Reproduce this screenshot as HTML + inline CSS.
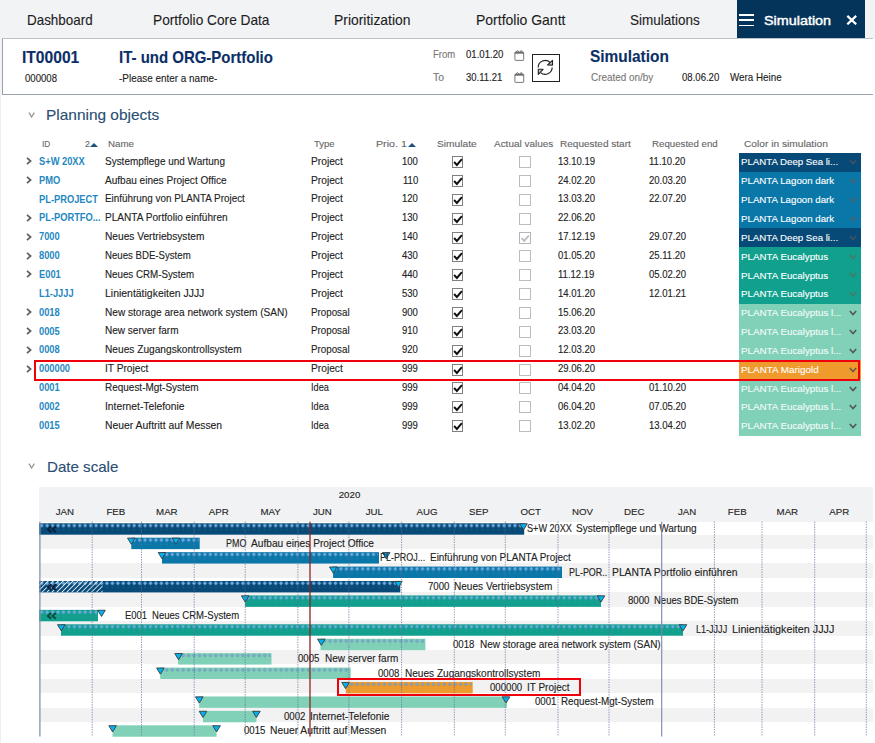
<!DOCTYPE html>
<html><head><meta charset="utf-8"><style>
html,body{margin:0;padding:0;width:875px;height:743px;overflow:hidden;background:#fff;position:relative;}
.t{position:absolute;white-space:nowrap;line-height:1;font-family:"Liberation Sans", sans-serif;-webkit-text-stroke:0.12px currentColor;}
</style></head><body>
<div style="position:absolute;left:0.00px;top:0.00px;width:875.00px;height:38.00px;background:#f2f3f5"></div>
<div class="t" style="left:26.70px;top:13.30px;font-size:14.3px;color:#1e1e1e;font-weight:normal;transform:scaleX(0.9381);transform-origin:0 0;">Dashboard</div>
<div class="t" style="left:153.40px;top:13.30px;font-size:14.3px;color:#1e1e1e;font-weight:normal;transform:scaleX(0.9581);transform-origin:0 0;">Portfolio Core Data</div>
<div class="t" style="left:334.30px;top:13.30px;font-size:14.3px;color:#1e1e1e;font-weight:normal;transform:scaleX(0.9727);transform-origin:0 0;">Prioritization</div>
<div class="t" style="left:476.20px;top:13.30px;font-size:14.3px;color:#1e1e1e;font-weight:normal;transform:scaleX(0.9784);transform-origin:0 0;">Portfolio Gantt</div>
<div class="t" style="left:630.00px;top:13.30px;font-size:14.3px;color:#1e1e1e;font-weight:normal;transform:scaleX(0.9441);transform-origin:0 0;">Simulations</div>
<div style="position:absolute;left:737.00px;top:0.00px;width:128.00px;height:38.00px;background:#04345a"></div>
<div style="position:absolute;left:739.00px;top:13.80px;width:14.50px;height:1.80px;background:#fff"></div>
<div style="position:absolute;left:739.00px;top:19.40px;width:14.50px;height:1.80px;background:#fff"></div>
<div style="position:absolute;left:739.00px;top:24.60px;width:14.50px;height:1.80px;background:#fff"></div>
<div class="t" style="left:764.30px;top:13.99px;font-size:13.6px;color:#fff;font-weight:normal;transform:scaleX(1.0565);transform-origin:0 0;-webkit-text-stroke:0.45px #fff;">Simulation</div>
<svg style="position:absolute;left:845.5px;top:15.3px" width="11.5" height="10" viewBox="0 0 11.5 10"><path d="M1.3 0.9 L10.2 9.3 M10.2 0.9 L1.3 9.3" stroke="#fff" stroke-width="2.2"/></svg>
<div style="position:absolute;left:0.00px;top:38.00px;width:875.00px;height:705.00px;background:#fff"></div>
<div style="position:absolute;left:0.00px;top:38.00px;width:2.00px;height:57.00px;background:#f2f3f5"></div>
<div style="position:absolute;left:0.00px;top:95.00px;width:1.00px;height:648.00px;background:#eeeeee"></div>
<div style="position:absolute;left:2.00px;top:38.00px;width:871.00px;height:57.00px;border:1px solid #9aa2ad;border-top-color:#bcc2ca;border-right:none;box-sizing:border-box;background:#fff"></div>
<div class="t" style="left:21.70px;top:49.02px;font-size:16.4px;color:#0b2f66;font-weight:bold;transform:scaleX(0.9520);transform-origin:0 0;">IT00001</div>
<div class="t" style="left:24.60px;top:72.73px;font-size:10.6px;color:#222;font-weight:normal;transform:scaleX(0.9052);transform-origin:0 0;">000008</div>
<div class="t" style="left:119.00px;top:49.02px;font-size:16.4px;color:#0b2f66;font-weight:bold;transform:scaleX(0.9139);transform-origin:0 0;">IT- und ORG-Portfolio</div>
<div class="t" style="left:119.40px;top:73.33px;font-size:10.6px;color:#222;font-weight:normal;transform:scaleX(0.9372);transform-origin:0 0;">-Please enter a name-</div>
<div class="t" style="left:432.80px;top:49.53px;font-size:10.0px;color:#777;font-weight:normal;transform:scaleX(0.9550);transform-origin:0 0;">From</div>
<div class="t" style="left:466.30px;top:49.53px;font-size:10.0px;color:#222;font-weight:normal;transform:scaleX(0.9602);transform-origin:0 0;">01.01.20</div>
<div class="t" style="left:432.80px;top:72.94px;font-size:10.0px;color:#777;font-weight:normal;transform:scaleX(1.0427);transform-origin:0 0;">To</div>
<div class="t" style="left:466.30px;top:72.94px;font-size:10.0px;color:#222;font-weight:normal;transform:scaleX(0.9503);transform-origin:0 0;">30.11.21</div>
<svg style="position:absolute;left:513.6px;top:50px" width="11" height="11" viewBox="0 0 11 11"><rect x="0.9" y="2.1" width="8.8" height="8.3" rx="0.6" fill="none" stroke="#6a6a6a" stroke-width="0.9"/><rect x="0.9" y="2.1" width="8.8" height="1.6" fill="#6a6a6a"/><path d="M2.3 2.6 Q2.3 0.6 3.6 0.6 Q4.6 0.6 4.6 2.6 M6.0 2.6 Q6.0 0.6 7.2 0.6 Q8.3 0.6 8.3 2.6" fill="none" stroke="#6a6a6a" stroke-width="0.9"/></svg>
<svg style="position:absolute;left:513.6px;top:72px" width="11" height="11" viewBox="0 0 11 11"><rect x="0.9" y="2.1" width="8.8" height="8.3" rx="0.6" fill="none" stroke="#6a6a6a" stroke-width="0.9"/><rect x="0.9" y="2.1" width="8.8" height="1.6" fill="#6a6a6a"/><path d="M2.3 2.6 Q2.3 0.6 3.6 0.6 Q4.6 0.6 4.6 2.6 M6.0 2.6 Q6.0 0.6 7.2 0.6 Q8.3 0.6 8.3 2.6" fill="none" stroke="#6a6a6a" stroke-width="0.9"/></svg>
<div style="position:absolute;left:532.00px;top:54.00px;width:28.00px;height:28.00px;border:1px solid #222;box-sizing:border-box"></div>
<svg style="position:absolute;left:536px;top:58px" width="20" height="20" viewBox="0 0 20 20"><path d="M2.2 9.6 A7 7 0 0 1 14.2 4.6" fill="none" stroke="#222" stroke-width="1.15"/><path d="M16.2 9.6 A7 7 0 0 1 4.6 14.6" fill="none" stroke="#222" stroke-width="1.15"/><path d="M11.6 7.0 L16.5 2.3 L16.5 7.1 Z" fill="#c8c8c8" stroke="#222" stroke-width="1.1" stroke-linejoin="round"/><path d="M2.3 11.3 L7.0 11.3 L2.3 16.3 Z" fill="#c8c8c8" stroke="#222" stroke-width="1.1" stroke-linejoin="round"/></svg>
<div class="t" style="left:589.60px;top:48.40px;font-size:16.3px;color:#0b2f66;font-weight:bold;transform:scaleX(0.9473);transform-origin:0 0;">Simulation</div>
<div class="t" style="left:590.60px;top:71.91px;font-size:10.5px;color:#777;font-weight:normal;transform:scaleX(0.9448);transform-origin:0 0;">Created on/by</div>
<div class="t" style="left:682.30px;top:71.91px;font-size:10.5px;color:#222;font-weight:normal;transform:scaleX(0.9120);transform-origin:0 0;">08.06.20</div>
<div class="t" style="left:730.10px;top:71.91px;font-size:10.5px;color:#222;font-weight:normal;transform:scaleX(0.9343);transform-origin:0 0;">Wera Heine</div>
<svg style="position:absolute;left:28px;top:112px" width="8" height="7" viewBox="0 0 8 7"><path d="M1 0.7 L3.6 5 L6.3 0.7" fill="none" stroke="#999" stroke-width="1.4"/></svg>
<div class="t" style="left:46.00px;top:107.74px;font-size:14.6px;color:#2a4d73;font-weight:normal;transform:scaleX(1.0573);transform-origin:0 0;">Planning objects</div>
<div class="t" style="left:41.70px;top:138.92px;font-size:9.9px;color:#666666;font-weight:normal;transform:scaleX(0.8283);transform-origin:0 0;">ID</div>
<div class="t" style="left:84.70px;top:138.92px;font-size:9.9px;color:#666666;font-weight:normal;transform:scaleX(0.9100);transform-origin:0 0;">2</div>
<svg style="position:absolute;left:90.3px;top:142.6px" width="8" height="4" viewBox="0 0 8 4"><path d="M0 4 L4 0 L8 4 Z" fill="#1c4f80"/></svg>
<div class="t" style="left:107.80px;top:138.92px;font-size:9.9px;color:#666666;font-weight:normal;transform:scaleX(0.9874);transform-origin:0 0;">Name</div>
<div class="t" style="left:313.80px;top:138.92px;font-size:9.9px;color:#666666;font-weight:normal;transform:scaleX(0.9589);transform-origin:0 0;">Type</div>
<div class="t" style="left:375.60px;top:138.92px;font-size:9.9px;color:#666666;font-weight:normal;transform:scaleX(1.0800);transform-origin:0 0;">Prio. 1</div>
<svg style="position:absolute;left:408.0px;top:142.6px" width="8" height="4" viewBox="0 0 8 4"><path d="M0 4 L4 0 L8 4 Z" fill="#1c4f80"/></svg>
<div class="t" style="left:436.70px;top:138.92px;font-size:9.9px;color:#666666;font-weight:normal;transform:scaleX(1.0335);transform-origin:0 0;">Simulate</div>
<div class="t" style="left:494.20px;top:138.92px;font-size:9.9px;color:#666666;font-weight:normal;transform:scaleX(1.0084);transform-origin:0 0;">Actual values</div>
<div class="t" style="left:560.30px;top:138.92px;font-size:9.9px;color:#666666;font-weight:normal;transform:scaleX(1.0158);transform-origin:0 0;">Requested start</div>
<div class="t" style="left:652.00px;top:138.92px;font-size:9.9px;color:#666666;font-weight:normal;transform:scaleX(0.9811);transform-origin:0 0;">Requested end</div>
<div class="t" style="left:743.80px;top:138.92px;font-size:9.9px;color:#666666;font-weight:normal;transform:scaleX(1.0316);transform-origin:0 0;">Color in simulation</div>
<svg style="position:absolute;left:25.5px;top:157.30px" width="6" height="8" viewBox="0 0 6 8"><path d="M1 0.9 L4.6 4 L1 7.1" fill="none" stroke="#5f5f5f" stroke-width="1.7"/></svg>
<div class="t" style="left:38.90px;top:156.87px;font-size:10.2px;color:#1f88c2;font-weight:bold;transform:scaleX(0.9130);transform-origin:0 0;-webkit-text-stroke:0;">S+W 20XX</div>
<div class="t" style="left:104.60px;top:155.73px;font-size:10.6px;color:#222;font-weight:normal;transform:scaleX(0.9414);transform-origin:0 0;">Systempflege und Wartung</div>
<div class="t" style="left:310.70px;top:155.73px;font-size:10.6px;color:#222;font-weight:normal;transform:scaleX(0.9646);transform-origin:0 0;">Project</div>
<div class="t" style="left:402.47px;top:155.73px;font-size:10.6px;color:#222;font-weight:normal;transform:scaleX(0.9000);transform-origin:0 0;">100</div>
<svg style="position:absolute;left:452px;top:156px" width="11" height="12" viewBox="0 0 11 12"><rect x="0.5" y="0.5" width="10" height="11" fill="#fff" stroke="#808080" stroke-width="1"/><path d="M2.1 6.0 L4.9 8.9 L9.9 3.2" fill="none" stroke="#111" stroke-width="2"/></svg>
<svg style="position:absolute;left:519px;top:156px" width="12" height="12" viewBox="0 0 12 12"><rect x="0.5" y="0.5" width="11" height="11" fill="#fff" stroke="#b8bdc2" stroke-width="1"/></svg>
<div class="t" style="left:557.60px;top:155.73px;font-size:10.6px;color:#222;font-weight:normal;transform:scaleX(0.9000);transform-origin:0 0;">13.10.19</div>
<div class="t" style="left:649.20px;top:155.73px;font-size:10.6px;color:#222;font-weight:normal;transform:scaleX(0.9000);transform-origin:0 0;">11.10.20</div>
<div style="position:absolute;left:739.00px;top:153.00px;width:122.00px;height:19.05px;background:#074a78"></div>
<div class="t" style="left:741.30px;top:157.42px;font-size:9.9px;color:#fff;font-weight:normal;transform:scaleX(0.9789);transform-origin:0 0;">PLANTA Deep Sea li...</div>
<svg style="position:absolute;left:848.5px;top:159.30px" width="8" height="6" viewBox="0 0 8 6"><path d="M0.8 0.9 L4 4.6 L7.2 0.9" fill="none" stroke="rgba(120,90,70,0.55)" stroke-width="1.5"/></svg>
<svg style="position:absolute;left:25.5px;top:176.15px" width="6" height="8" viewBox="0 0 6 8"><path d="M1 0.9 L4.6 4 L1 7.1" fill="none" stroke="#5f5f5f" stroke-width="1.7"/></svg>
<div class="t" style="left:38.90px;top:175.72px;font-size:10.2px;color:#1f88c2;font-weight:bold;transform:scaleX(0.9130);transform-origin:0 0;-webkit-text-stroke:0;">PMO</div>
<div class="t" style="left:104.60px;top:174.58px;font-size:10.6px;color:#222;font-weight:normal;transform:scaleX(0.9481);transform-origin:0 0;">Aufbau eines Project Office</div>
<div class="t" style="left:310.70px;top:174.58px;font-size:10.6px;color:#222;font-weight:normal;transform:scaleX(0.9646);transform-origin:0 0;">Project</div>
<div class="t" style="left:403.18px;top:174.58px;font-size:10.6px;color:#222;font-weight:normal;transform:scaleX(0.9000);transform-origin:0 0;">110</div>
<svg style="position:absolute;left:452px;top:175px" width="11" height="12" viewBox="0 0 11 12"><rect x="0.5" y="0.5" width="10" height="11" fill="#fff" stroke="#808080" stroke-width="1"/><path d="M2.1 6.0 L4.9 8.9 L9.9 3.2" fill="none" stroke="#111" stroke-width="2"/></svg>
<svg style="position:absolute;left:519px;top:175px" width="12" height="12" viewBox="0 0 12 12"><rect x="0.5" y="0.5" width="11" height="11" fill="#fff" stroke="#b8bdc2" stroke-width="1"/></svg>
<div class="t" style="left:557.60px;top:174.58px;font-size:10.6px;color:#222;font-weight:normal;transform:scaleX(0.9000);transform-origin:0 0;">24.02.20</div>
<div class="t" style="left:649.20px;top:174.58px;font-size:10.6px;color:#222;font-weight:normal;transform:scaleX(0.9000);transform-origin:0 0;">20.03.20</div>
<div style="position:absolute;left:739.00px;top:171.85px;width:122.00px;height:19.05px;background:#0a77a9"></div>
<div class="t" style="left:741.30px;top:176.27px;font-size:9.9px;color:#fff;font-weight:normal;transform:scaleX(0.9833);transform-origin:0 0;">PLANTA Lagoon dark</div>
<svg style="position:absolute;left:848.5px;top:178.15px" width="8" height="6" viewBox="0 0 8 6"><path d="M0.8 0.9 L4 4.6 L7.2 0.9" fill="none" stroke="rgba(120,90,70,0.55)" stroke-width="1.5"/></svg>
<div class="t" style="left:38.90px;top:194.57px;font-size:10.2px;color:#1f88c2;font-weight:bold;transform:scaleX(0.9130);transform-origin:0 0;-webkit-text-stroke:0;">PL-PROJECT</div>
<div class="t" style="left:104.60px;top:193.43px;font-size:10.6px;color:#222;font-weight:normal;transform:scaleX(0.9324);transform-origin:0 0;">Einführung von PLANTA Project</div>
<div class="t" style="left:310.70px;top:193.43px;font-size:10.6px;color:#222;font-weight:normal;transform:scaleX(0.9646);transform-origin:0 0;">Project</div>
<div class="t" style="left:402.47px;top:193.43px;font-size:10.6px;color:#222;font-weight:normal;transform:scaleX(0.9000);transform-origin:0 0;">120</div>
<svg style="position:absolute;left:452px;top:194px" width="11" height="12" viewBox="0 0 11 12"><rect x="0.5" y="0.5" width="10" height="11" fill="#fff" stroke="#808080" stroke-width="1"/><path d="M2.1 6.0 L4.9 8.9 L9.9 3.2" fill="none" stroke="#111" stroke-width="2"/></svg>
<svg style="position:absolute;left:519px;top:194px" width="12" height="12" viewBox="0 0 12 12"><rect x="0.5" y="0.5" width="11" height="11" fill="#fff" stroke="#b8bdc2" stroke-width="1"/></svg>
<div class="t" style="left:557.60px;top:193.43px;font-size:10.6px;color:#222;font-weight:normal;transform:scaleX(0.9000);transform-origin:0 0;">13.03.20</div>
<div class="t" style="left:649.20px;top:193.43px;font-size:10.6px;color:#222;font-weight:normal;transform:scaleX(0.9000);transform-origin:0 0;">22.07.20</div>
<div style="position:absolute;left:739.00px;top:190.70px;width:122.00px;height:19.05px;background:#0a77a9"></div>
<div class="t" style="left:741.30px;top:195.12px;font-size:9.9px;color:#fff;font-weight:normal;transform:scaleX(0.9833);transform-origin:0 0;">PLANTA Lagoon dark</div>
<svg style="position:absolute;left:848.5px;top:197.00px" width="8" height="6" viewBox="0 0 8 6"><path d="M0.8 0.9 L4 4.6 L7.2 0.9" fill="none" stroke="rgba(120,90,70,0.55)" stroke-width="1.5"/></svg>
<svg style="position:absolute;left:25.5px;top:213.85px" width="6" height="8" viewBox="0 0 6 8"><path d="M1 0.9 L4.6 4 L1 7.1" fill="none" stroke="#5f5f5f" stroke-width="1.7"/></svg>
<div class="t" style="left:38.90px;top:213.42px;font-size:10.2px;color:#1f88c2;font-weight:bold;transform:scaleX(0.9130);transform-origin:0 0;-webkit-text-stroke:0;">PL-PORTFO...</div>
<div class="t" style="left:104.60px;top:212.28px;font-size:10.6px;color:#222;font-weight:normal;transform:scaleX(0.9523);transform-origin:0 0;">PLANTA Portfolio einführen</div>
<div class="t" style="left:310.70px;top:212.28px;font-size:10.6px;color:#222;font-weight:normal;transform:scaleX(0.9646);transform-origin:0 0;">Project</div>
<div class="t" style="left:402.47px;top:212.28px;font-size:10.6px;color:#222;font-weight:normal;transform:scaleX(0.9000);transform-origin:0 0;">130</div>
<svg style="position:absolute;left:452px;top:213px" width="11" height="12" viewBox="0 0 11 12"><rect x="0.5" y="0.5" width="10" height="11" fill="#fff" stroke="#808080" stroke-width="1"/><path d="M2.1 6.0 L4.9 8.9 L9.9 3.2" fill="none" stroke="#111" stroke-width="2"/></svg>
<svg style="position:absolute;left:519px;top:213px" width="12" height="12" viewBox="0 0 12 12"><rect x="0.5" y="0.5" width="11" height="11" fill="#fff" stroke="#b8bdc2" stroke-width="1"/></svg>
<div class="t" style="left:557.60px;top:212.28px;font-size:10.6px;color:#222;font-weight:normal;transform:scaleX(0.9000);transform-origin:0 0;">22.06.20</div>
<div style="position:absolute;left:739.00px;top:209.55px;width:122.00px;height:19.05px;background:#0a77a9"></div>
<div class="t" style="left:741.30px;top:213.97px;font-size:9.9px;color:#fff;font-weight:normal;transform:scaleX(0.9833);transform-origin:0 0;">PLANTA Lagoon dark</div>
<svg style="position:absolute;left:848.5px;top:215.85px" width="8" height="6" viewBox="0 0 8 6"><path d="M0.8 0.9 L4 4.6 L7.2 0.9" fill="none" stroke="rgba(120,90,70,0.55)" stroke-width="1.5"/></svg>
<svg style="position:absolute;left:25.5px;top:232.70px" width="6" height="8" viewBox="0 0 6 8"><path d="M1 0.9 L4.6 4 L1 7.1" fill="none" stroke="#5f5f5f" stroke-width="1.7"/></svg>
<div class="t" style="left:38.90px;top:232.27px;font-size:10.2px;color:#1f88c2;font-weight:bold;transform:scaleX(0.9130);transform-origin:0 0;-webkit-text-stroke:0;">7000</div>
<div class="t" style="left:104.60px;top:231.13px;font-size:10.6px;color:#222;font-weight:normal;transform:scaleX(0.9588);transform-origin:0 0;">Neues Vertriebsystem</div>
<div class="t" style="left:310.70px;top:231.13px;font-size:10.6px;color:#222;font-weight:normal;transform:scaleX(0.9646);transform-origin:0 0;">Project</div>
<div class="t" style="left:402.47px;top:231.13px;font-size:10.6px;color:#222;font-weight:normal;transform:scaleX(0.9000);transform-origin:0 0;">140</div>
<svg style="position:absolute;left:452px;top:232px" width="11" height="12" viewBox="0 0 11 12"><rect x="0.5" y="0.5" width="10" height="11" fill="#fff" stroke="#808080" stroke-width="1"/><path d="M2.1 6.0 L4.9 8.9 L9.9 3.2" fill="none" stroke="#111" stroke-width="2"/></svg>
<svg style="position:absolute;left:519px;top:232px" width="12" height="12" viewBox="0 0 12 12"><rect x="0.5" y="0.5" width="11" height="11" fill="#fff" stroke="#b3b8bd" stroke-width="1"/><path d="M2.6 6.2 L5.2 8.9 L9.8 3.6" fill="none" stroke="#b8bcc0" stroke-width="1.8"/></svg>
<div class="t" style="left:557.60px;top:231.13px;font-size:10.6px;color:#222;font-weight:normal;transform:scaleX(0.9000);transform-origin:0 0;">17.12.19</div>
<div class="t" style="left:649.20px;top:231.13px;font-size:10.6px;color:#222;font-weight:normal;transform:scaleX(0.9000);transform-origin:0 0;">29.07.20</div>
<div style="position:absolute;left:739.00px;top:228.40px;width:122.00px;height:19.05px;background:#074a78"></div>
<div class="t" style="left:741.30px;top:232.82px;font-size:9.9px;color:#fff;font-weight:normal;transform:scaleX(0.9789);transform-origin:0 0;">PLANTA Deep Sea li...</div>
<svg style="position:absolute;left:848.5px;top:234.70px" width="8" height="6" viewBox="0 0 8 6"><path d="M0.8 0.9 L4 4.6 L7.2 0.9" fill="none" stroke="rgba(120,90,70,0.55)" stroke-width="1.5"/></svg>
<svg style="position:absolute;left:25.5px;top:251.55px" width="6" height="8" viewBox="0 0 6 8"><path d="M1 0.9 L4.6 4 L1 7.1" fill="none" stroke="#5f5f5f" stroke-width="1.7"/></svg>
<div class="t" style="left:38.90px;top:251.12px;font-size:10.2px;color:#1f88c2;font-weight:bold;transform:scaleX(0.9130);transform-origin:0 0;-webkit-text-stroke:0;">8000</div>
<div class="t" style="left:104.60px;top:249.98px;font-size:10.6px;color:#222;font-weight:normal;transform:scaleX(0.9094);transform-origin:0 0;">Neues BDE-System</div>
<div class="t" style="left:310.70px;top:249.98px;font-size:10.6px;color:#222;font-weight:normal;transform:scaleX(0.9646);transform-origin:0 0;">Project</div>
<div class="t" style="left:402.47px;top:249.98px;font-size:10.6px;color:#222;font-weight:normal;transform:scaleX(0.9000);transform-origin:0 0;">430</div>
<svg style="position:absolute;left:452px;top:250px" width="11" height="12" viewBox="0 0 11 12"><rect x="0.5" y="0.5" width="10" height="11" fill="#fff" stroke="#808080" stroke-width="1"/><path d="M2.1 6.0 L4.9 8.9 L9.9 3.2" fill="none" stroke="#111" stroke-width="2"/></svg>
<svg style="position:absolute;left:519px;top:250px" width="12" height="12" viewBox="0 0 12 12"><rect x="0.5" y="0.5" width="11" height="11" fill="#fff" stroke="#b8bdc2" stroke-width="1"/></svg>
<div class="t" style="left:557.60px;top:249.98px;font-size:10.6px;color:#222;font-weight:normal;transform:scaleX(0.9000);transform-origin:0 0;">01.05.20</div>
<div class="t" style="left:649.20px;top:249.98px;font-size:10.6px;color:#222;font-weight:normal;transform:scaleX(0.9000);transform-origin:0 0;">25.11.20</div>
<div style="position:absolute;left:739.00px;top:247.25px;width:122.00px;height:19.05px;background:#11a08e"></div>
<div class="t" style="left:741.30px;top:251.67px;font-size:9.9px;color:#fff;font-weight:normal;transform:scaleX(0.9875);transform-origin:0 0;">PLANTA Eucalyptus</div>
<svg style="position:absolute;left:848.5px;top:253.55px" width="8" height="6" viewBox="0 0 8 6"><path d="M0.8 0.9 L4 4.6 L7.2 0.9" fill="none" stroke="rgba(120,90,70,0.55)" stroke-width="1.5"/></svg>
<svg style="position:absolute;left:25.5px;top:270.40px" width="6" height="8" viewBox="0 0 6 8"><path d="M1 0.9 L4.6 4 L1 7.1" fill="none" stroke="#5f5f5f" stroke-width="1.7"/></svg>
<div class="t" style="left:38.90px;top:269.97px;font-size:10.2px;color:#1f88c2;font-weight:bold;transform:scaleX(0.9130);transform-origin:0 0;-webkit-text-stroke:0;">E001</div>
<div class="t" style="left:104.60px;top:268.83px;font-size:10.6px;color:#222;font-weight:normal;transform:scaleX(0.9222);transform-origin:0 0;">Neues CRM-System</div>
<div class="t" style="left:310.70px;top:268.83px;font-size:10.6px;color:#222;font-weight:normal;transform:scaleX(0.9646);transform-origin:0 0;">Project</div>
<div class="t" style="left:402.47px;top:268.83px;font-size:10.6px;color:#222;font-weight:normal;transform:scaleX(0.9000);transform-origin:0 0;">440</div>
<svg style="position:absolute;left:452px;top:269px" width="11" height="12" viewBox="0 0 11 12"><rect x="0.5" y="0.5" width="10" height="11" fill="#fff" stroke="#808080" stroke-width="1"/><path d="M2.1 6.0 L4.9 8.9 L9.9 3.2" fill="none" stroke="#111" stroke-width="2"/></svg>
<svg style="position:absolute;left:519px;top:269px" width="12" height="12" viewBox="0 0 12 12"><rect x="0.5" y="0.5" width="11" height="11" fill="#fff" stroke="#b8bdc2" stroke-width="1"/></svg>
<div class="t" style="left:557.60px;top:268.83px;font-size:10.6px;color:#222;font-weight:normal;transform:scaleX(0.9000);transform-origin:0 0;">11.12.19</div>
<div class="t" style="left:649.20px;top:268.83px;font-size:10.6px;color:#222;font-weight:normal;transform:scaleX(0.9000);transform-origin:0 0;">05.02.20</div>
<div style="position:absolute;left:739.00px;top:266.10px;width:122.00px;height:19.05px;background:#11a08e"></div>
<div class="t" style="left:741.30px;top:270.52px;font-size:9.9px;color:#fff;font-weight:normal;transform:scaleX(0.9875);transform-origin:0 0;">PLANTA Eucalyptus</div>
<svg style="position:absolute;left:848.5px;top:272.40px" width="8" height="6" viewBox="0 0 8 6"><path d="M0.8 0.9 L4 4.6 L7.2 0.9" fill="none" stroke="rgba(120,90,70,0.55)" stroke-width="1.5"/></svg>
<div class="t" style="left:38.90px;top:288.82px;font-size:10.2px;color:#1f88c2;font-weight:bold;transform:scaleX(0.9130);transform-origin:0 0;-webkit-text-stroke:0;">L1-JJJJ</div>
<div class="t" style="left:104.60px;top:287.68px;font-size:10.6px;color:#222;font-weight:normal;transform:scaleX(0.9866);transform-origin:0 0;">Linientätigkeiten JJJJ</div>
<div class="t" style="left:310.70px;top:287.68px;font-size:10.6px;color:#222;font-weight:normal;transform:scaleX(0.9646);transform-origin:0 0;">Project</div>
<div class="t" style="left:402.47px;top:287.68px;font-size:10.6px;color:#222;font-weight:normal;transform:scaleX(0.9000);transform-origin:0 0;">530</div>
<svg style="position:absolute;left:452px;top:288px" width="11" height="12" viewBox="0 0 11 12"><rect x="0.5" y="0.5" width="10" height="11" fill="#fff" stroke="#808080" stroke-width="1"/><path d="M2.1 6.0 L4.9 8.9 L9.9 3.2" fill="none" stroke="#111" stroke-width="2"/></svg>
<svg style="position:absolute;left:519px;top:288px" width="12" height="12" viewBox="0 0 12 12"><rect x="0.5" y="0.5" width="11" height="11" fill="#fff" stroke="#b8bdc2" stroke-width="1"/></svg>
<div class="t" style="left:557.60px;top:287.68px;font-size:10.6px;color:#222;font-weight:normal;transform:scaleX(0.9000);transform-origin:0 0;">14.01.20</div>
<div class="t" style="left:649.20px;top:287.68px;font-size:10.6px;color:#222;font-weight:normal;transform:scaleX(0.9000);transform-origin:0 0;">12.01.21</div>
<div style="position:absolute;left:739.00px;top:284.95px;width:122.00px;height:19.05px;background:#11a08e"></div>
<div class="t" style="left:741.30px;top:289.37px;font-size:9.9px;color:#fff;font-weight:normal;transform:scaleX(0.9875);transform-origin:0 0;">PLANTA Eucalyptus</div>
<svg style="position:absolute;left:848.5px;top:291.25px" width="8" height="6" viewBox="0 0 8 6"><path d="M0.8 0.9 L4 4.6 L7.2 0.9" fill="none" stroke="rgba(120,90,70,0.55)" stroke-width="1.5"/></svg>
<svg style="position:absolute;left:25.5px;top:308.10px" width="6" height="8" viewBox="0 0 6 8"><path d="M1 0.9 L4.6 4 L1 7.1" fill="none" stroke="#5f5f5f" stroke-width="1.7"/></svg>
<div class="t" style="left:38.90px;top:307.67px;font-size:10.2px;color:#1f88c2;font-weight:bold;transform:scaleX(0.9130);transform-origin:0 0;-webkit-text-stroke:0;">0018</div>
<div class="t" style="left:104.60px;top:306.53px;font-size:10.6px;color:#222;font-weight:normal;transform:scaleX(0.9517);transform-origin:0 0;">New storage area network system (SAN)</div>
<div class="t" style="left:310.70px;top:306.53px;font-size:10.6px;color:#222;font-weight:normal;transform:scaleX(0.9231);transform-origin:0 0;">Proposal</div>
<div class="t" style="left:402.47px;top:306.53px;font-size:10.6px;color:#222;font-weight:normal;transform:scaleX(0.9000);transform-origin:0 0;">900</div>
<svg style="position:absolute;left:452px;top:307px" width="11" height="12" viewBox="0 0 11 12"><rect x="0.5" y="0.5" width="10" height="11" fill="#fff" stroke="#808080" stroke-width="1"/><path d="M2.1 6.0 L4.9 8.9 L9.9 3.2" fill="none" stroke="#111" stroke-width="2"/></svg>
<svg style="position:absolute;left:519px;top:307px" width="12" height="12" viewBox="0 0 12 12"><rect x="0.5" y="0.5" width="11" height="11" fill="#fff" stroke="#b8bdc2" stroke-width="1"/></svg>
<div class="t" style="left:557.60px;top:306.53px;font-size:10.6px;color:#222;font-weight:normal;transform:scaleX(0.9000);transform-origin:0 0;">15.06.20</div>
<div style="position:absolute;left:739.00px;top:303.80px;width:122.00px;height:19.05px;background:#80d1b8"></div>
<div class="t" style="left:741.30px;top:308.22px;font-size:9.9px;color:#f4fbf8;font-weight:normal;transform:scaleX(0.9899);transform-origin:0 0;">PLANTA Eucalyptus l...</div>
<svg style="position:absolute;left:848.5px;top:310.10px" width="8" height="6" viewBox="0 0 8 6"><path d="M0.8 0.9 L4 4.6 L7.2 0.9" fill="none" stroke="#555" stroke-width="1.5"/></svg>
<svg style="position:absolute;left:25.5px;top:326.95px" width="6" height="8" viewBox="0 0 6 8"><path d="M1 0.9 L4.6 4 L1 7.1" fill="none" stroke="#5f5f5f" stroke-width="1.7"/></svg>
<div class="t" style="left:38.90px;top:326.52px;font-size:10.2px;color:#1f88c2;font-weight:bold;transform:scaleX(0.9130);transform-origin:0 0;-webkit-text-stroke:0;">0005</div>
<div class="t" style="left:104.60px;top:325.38px;font-size:10.6px;color:#222;font-weight:normal;transform:scaleX(0.9466);transform-origin:0 0;">New server farm</div>
<div class="t" style="left:310.70px;top:325.38px;font-size:10.6px;color:#222;font-weight:normal;transform:scaleX(0.9231);transform-origin:0 0;">Proposal</div>
<div class="t" style="left:402.47px;top:325.38px;font-size:10.6px;color:#222;font-weight:normal;transform:scaleX(0.9000);transform-origin:0 0;">910</div>
<svg style="position:absolute;left:452px;top:326px" width="11" height="12" viewBox="0 0 11 12"><rect x="0.5" y="0.5" width="10" height="11" fill="#fff" stroke="#808080" stroke-width="1"/><path d="M2.1 6.0 L4.9 8.9 L9.9 3.2" fill="none" stroke="#111" stroke-width="2"/></svg>
<svg style="position:absolute;left:519px;top:326px" width="12" height="12" viewBox="0 0 12 12"><rect x="0.5" y="0.5" width="11" height="11" fill="#fff" stroke="#b8bdc2" stroke-width="1"/></svg>
<div class="t" style="left:557.60px;top:325.38px;font-size:10.6px;color:#222;font-weight:normal;transform:scaleX(0.9000);transform-origin:0 0;">23.03.20</div>
<div style="position:absolute;left:739.00px;top:322.65px;width:122.00px;height:19.05px;background:#80d1b8"></div>
<div class="t" style="left:741.30px;top:327.07px;font-size:9.9px;color:#f4fbf8;font-weight:normal;transform:scaleX(0.9899);transform-origin:0 0;">PLANTA Eucalyptus l...</div>
<svg style="position:absolute;left:848.5px;top:328.95px" width="8" height="6" viewBox="0 0 8 6"><path d="M0.8 0.9 L4 4.6 L7.2 0.9" fill="none" stroke="#555" stroke-width="1.5"/></svg>
<svg style="position:absolute;left:25.5px;top:345.80px" width="6" height="8" viewBox="0 0 6 8"><path d="M1 0.9 L4.6 4 L1 7.1" fill="none" stroke="#5f5f5f" stroke-width="1.7"/></svg>
<div class="t" style="left:38.90px;top:345.37px;font-size:10.2px;color:#1f88c2;font-weight:bold;transform:scaleX(0.9130);transform-origin:0 0;-webkit-text-stroke:0;">0008</div>
<div class="t" style="left:104.60px;top:344.23px;font-size:10.6px;color:#222;font-weight:normal;transform:scaleX(0.9588);transform-origin:0 0;">Neues Zugangskontrollsystem</div>
<div class="t" style="left:310.70px;top:344.23px;font-size:10.6px;color:#222;font-weight:normal;transform:scaleX(0.9231);transform-origin:0 0;">Proposal</div>
<div class="t" style="left:402.47px;top:344.23px;font-size:10.6px;color:#222;font-weight:normal;transform:scaleX(0.9000);transform-origin:0 0;">920</div>
<svg style="position:absolute;left:452px;top:345px" width="11" height="12" viewBox="0 0 11 12"><rect x="0.5" y="0.5" width="10" height="11" fill="#fff" stroke="#808080" stroke-width="1"/><path d="M2.1 6.0 L4.9 8.9 L9.9 3.2" fill="none" stroke="#111" stroke-width="2"/></svg>
<svg style="position:absolute;left:519px;top:345px" width="12" height="12" viewBox="0 0 12 12"><rect x="0.5" y="0.5" width="11" height="11" fill="#fff" stroke="#b8bdc2" stroke-width="1"/></svg>
<div class="t" style="left:557.60px;top:344.23px;font-size:10.6px;color:#222;font-weight:normal;transform:scaleX(0.9000);transform-origin:0 0;">12.03.20</div>
<div style="position:absolute;left:739.00px;top:341.50px;width:122.00px;height:19.05px;background:#80d1b8"></div>
<div class="t" style="left:741.30px;top:345.92px;font-size:9.9px;color:#f4fbf8;font-weight:normal;transform:scaleX(0.9899);transform-origin:0 0;">PLANTA Eucalyptus l...</div>
<svg style="position:absolute;left:848.5px;top:347.80px" width="8" height="6" viewBox="0 0 8 6"><path d="M0.8 0.9 L4 4.6 L7.2 0.9" fill="none" stroke="#555" stroke-width="1.5"/></svg>
<svg style="position:absolute;left:25.5px;top:364.65px" width="6" height="8" viewBox="0 0 6 8"><path d="M1 0.9 L4.6 4 L1 7.1" fill="none" stroke="#5f5f5f" stroke-width="1.7"/></svg>
<div class="t" style="left:38.90px;top:364.22px;font-size:10.2px;color:#1f88c2;font-weight:bold;transform:scaleX(0.9130);transform-origin:0 0;-webkit-text-stroke:0;">000000</div>
<div class="t" style="left:104.60px;top:363.08px;font-size:10.6px;color:#222;font-weight:normal;transform:scaleX(0.9611);transform-origin:0 0;">IT Project</div>
<div class="t" style="left:310.70px;top:363.08px;font-size:10.6px;color:#222;font-weight:normal;transform:scaleX(0.9646);transform-origin:0 0;">Project</div>
<div class="t" style="left:402.47px;top:363.08px;font-size:10.6px;color:#222;font-weight:normal;transform:scaleX(0.9000);transform-origin:0 0;">999</div>
<svg style="position:absolute;left:452px;top:364px" width="11" height="12" viewBox="0 0 11 12"><rect x="0.5" y="0.5" width="10" height="11" fill="#fff" stroke="#808080" stroke-width="1"/><path d="M2.1 6.0 L4.9 8.9 L9.9 3.2" fill="none" stroke="#111" stroke-width="2"/></svg>
<svg style="position:absolute;left:519px;top:364px" width="12" height="12" viewBox="0 0 12 12"><rect x="0.5" y="0.5" width="11" height="11" fill="#fff" stroke="#b8bdc2" stroke-width="1"/></svg>
<div class="t" style="left:557.60px;top:363.08px;font-size:10.6px;color:#222;font-weight:normal;transform:scaleX(0.9000);transform-origin:0 0;">29.06.20</div>
<div style="position:absolute;left:739.00px;top:360.35px;width:122.00px;height:19.05px;background:#ef9a2c"></div>
<div class="t" style="left:741.30px;top:364.77px;font-size:9.9px;color:#fff;font-weight:normal;transform:scaleX(0.9992);transform-origin:0 0;">PLANTA Marigold</div>
<svg style="position:absolute;left:848.5px;top:366.65px" width="8" height="6" viewBox="0 0 8 6"><path d="M0.8 0.9 L4 4.6 L7.2 0.9" fill="none" stroke="#6a5a4a" stroke-width="1.5"/></svg>
<div class="t" style="left:38.90px;top:383.07px;font-size:10.2px;color:#1f88c2;font-weight:bold;transform:scaleX(0.9130);transform-origin:0 0;-webkit-text-stroke:0;">0001</div>
<div class="t" style="left:104.60px;top:381.93px;font-size:10.6px;color:#222;font-weight:normal;transform:scaleX(0.9414);transform-origin:0 0;">Request-Mgt-System</div>
<div class="t" style="left:310.70px;top:381.93px;font-size:10.6px;color:#222;font-weight:normal;transform:scaleX(0.8660);transform-origin:0 0;">Idea</div>
<div class="t" style="left:402.47px;top:381.93px;font-size:10.6px;color:#222;font-weight:normal;transform:scaleX(0.9000);transform-origin:0 0;">999</div>
<svg style="position:absolute;left:452px;top:382px" width="11" height="12" viewBox="0 0 11 12"><rect x="0.5" y="0.5" width="10" height="11" fill="#fff" stroke="#808080" stroke-width="1"/><path d="M2.1 6.0 L4.9 8.9 L9.9 3.2" fill="none" stroke="#111" stroke-width="2"/></svg>
<svg style="position:absolute;left:519px;top:382px" width="12" height="12" viewBox="0 0 12 12"><rect x="0.5" y="0.5" width="11" height="11" fill="#fff" stroke="#b8bdc2" stroke-width="1"/></svg>
<div class="t" style="left:557.60px;top:381.93px;font-size:10.6px;color:#222;font-weight:normal;transform:scaleX(0.9000);transform-origin:0 0;">04.04.20</div>
<div class="t" style="left:649.20px;top:381.93px;font-size:10.6px;color:#222;font-weight:normal;transform:scaleX(0.9000);transform-origin:0 0;">01.10.20</div>
<div style="position:absolute;left:739.00px;top:379.20px;width:122.00px;height:19.05px;background:#80d1b8"></div>
<div class="t" style="left:741.30px;top:383.62px;font-size:9.9px;color:#f4fbf8;font-weight:normal;transform:scaleX(0.9899);transform-origin:0 0;">PLANTA Eucalyptus l...</div>
<svg style="position:absolute;left:848.5px;top:385.50px" width="8" height="6" viewBox="0 0 8 6"><path d="M0.8 0.9 L4 4.6 L7.2 0.9" fill="none" stroke="#555" stroke-width="1.5"/></svg>
<div class="t" style="left:38.90px;top:401.92px;font-size:10.2px;color:#1f88c2;font-weight:bold;transform:scaleX(0.9130);transform-origin:0 0;-webkit-text-stroke:0;">0002</div>
<div class="t" style="left:104.60px;top:400.78px;font-size:10.6px;color:#222;font-weight:normal;transform:scaleX(0.9709);transform-origin:0 0;">Internet-Telefonie</div>
<div class="t" style="left:310.70px;top:400.78px;font-size:10.6px;color:#222;font-weight:normal;transform:scaleX(0.8660);transform-origin:0 0;">Idea</div>
<div class="t" style="left:402.47px;top:400.78px;font-size:10.6px;color:#222;font-weight:normal;transform:scaleX(0.9000);transform-origin:0 0;">999</div>
<svg style="position:absolute;left:452px;top:401px" width="11" height="12" viewBox="0 0 11 12"><rect x="0.5" y="0.5" width="10" height="11" fill="#fff" stroke="#808080" stroke-width="1"/><path d="M2.1 6.0 L4.9 8.9 L9.9 3.2" fill="none" stroke="#111" stroke-width="2"/></svg>
<svg style="position:absolute;left:519px;top:401px" width="12" height="12" viewBox="0 0 12 12"><rect x="0.5" y="0.5" width="11" height="11" fill="#fff" stroke="#b8bdc2" stroke-width="1"/></svg>
<div class="t" style="left:557.60px;top:400.78px;font-size:10.6px;color:#222;font-weight:normal;transform:scaleX(0.9000);transform-origin:0 0;">06.04.20</div>
<div class="t" style="left:649.20px;top:400.78px;font-size:10.6px;color:#222;font-weight:normal;transform:scaleX(0.9000);transform-origin:0 0;">07.05.20</div>
<div style="position:absolute;left:739.00px;top:398.05px;width:122.00px;height:19.05px;background:#80d1b8"></div>
<div class="t" style="left:741.30px;top:402.47px;font-size:9.9px;color:#f4fbf8;font-weight:normal;transform:scaleX(0.9899);transform-origin:0 0;">PLANTA Eucalyptus l...</div>
<svg style="position:absolute;left:848.5px;top:404.35px" width="8" height="6" viewBox="0 0 8 6"><path d="M0.8 0.9 L4 4.6 L7.2 0.9" fill="none" stroke="#555" stroke-width="1.5"/></svg>
<div class="t" style="left:38.90px;top:420.77px;font-size:10.2px;color:#1f88c2;font-weight:bold;transform:scaleX(0.9130);transform-origin:0 0;-webkit-text-stroke:0;">0015</div>
<div class="t" style="left:104.60px;top:419.63px;font-size:10.6px;color:#222;font-weight:normal;transform:scaleX(0.9798);transform-origin:0 0;">Neuer Auftritt auf Messen</div>
<div class="t" style="left:310.70px;top:419.63px;font-size:10.6px;color:#222;font-weight:normal;transform:scaleX(0.8660);transform-origin:0 0;">Idea</div>
<div class="t" style="left:402.47px;top:419.63px;font-size:10.6px;color:#222;font-weight:normal;transform:scaleX(0.9000);transform-origin:0 0;">999</div>
<svg style="position:absolute;left:452px;top:420px" width="11" height="12" viewBox="0 0 11 12"><rect x="0.5" y="0.5" width="10" height="11" fill="#fff" stroke="#808080" stroke-width="1"/><path d="M2.1 6.0 L4.9 8.9 L9.9 3.2" fill="none" stroke="#111" stroke-width="2"/></svg>
<svg style="position:absolute;left:519px;top:420px" width="12" height="12" viewBox="0 0 12 12"><rect x="0.5" y="0.5" width="11" height="11" fill="#fff" stroke="#b8bdc2" stroke-width="1"/></svg>
<div class="t" style="left:557.60px;top:419.63px;font-size:10.6px;color:#222;font-weight:normal;transform:scaleX(0.9000);transform-origin:0 0;">13.02.20</div>
<div class="t" style="left:649.20px;top:419.63px;font-size:10.6px;color:#222;font-weight:normal;transform:scaleX(0.9000);transform-origin:0 0;">13.04.20</div>
<div style="position:absolute;left:739.00px;top:416.90px;width:122.00px;height:19.05px;background:#80d1b8"></div>
<div class="t" style="left:741.30px;top:421.32px;font-size:9.9px;color:#f4fbf8;font-weight:normal;transform:scaleX(0.9899);transform-origin:0 0;">PLANTA Eucalyptus l...</div>
<svg style="position:absolute;left:848.5px;top:423.20px" width="8" height="6" viewBox="0 0 8 6"><path d="M0.8 0.9 L4 4.6 L7.2 0.9" fill="none" stroke="#555" stroke-width="1.5"/></svg>
<div style="position:absolute;left:34.00px;top:360.00px;width:826.00px;height:21.00px;border:2px solid #f0000a;box-sizing:border-box"></div>
<svg style="position:absolute;left:28px;top:463px" width="8" height="7" viewBox="0 0 8 7"><path d="M1 0.7 L3.6 5 L6.3 0.7" fill="none" stroke="#999" stroke-width="1.4"/></svg>
<div class="t" style="left:46.50px;top:460.27px;font-size:14.8px;color:#2a4d73;font-weight:normal;transform:scaleX(1.0210);transform-origin:0 0;">Date scale</div>
<div style="position:absolute;left:39.30px;top:486.50px;width:833.80px;height:35.20px;background:#f1f2f4"></div>
<div class="t" style="left:249.50px;width:200px;text-align:center;top:489.69px;font-size:9.7px;color:#222;font-weight:normal;">2020</div>
<div class="t" style="left:-35.15px;width:200px;text-align:center;top:506.89px;font-size:9.7px;color:#222;font-weight:normal;">JAN</div>
<div class="t" style="left:15.85px;width:200px;text-align:center;top:506.89px;font-size:9.7px;color:#222;font-weight:normal;">FEB</div>
<div class="t" style="left:66.85px;width:200px;text-align:center;top:506.89px;font-size:9.7px;color:#222;font-weight:normal;">MAR</div>
<div class="t" style="left:118.70px;width:200px;text-align:center;top:506.89px;font-size:9.7px;color:#222;font-weight:normal;">APR</div>
<div class="t" style="left:170.55px;width:200px;text-align:center;top:506.89px;font-size:9.7px;color:#222;font-weight:normal;">MAY</div>
<div class="t" style="left:222.40px;width:200px;text-align:center;top:506.89px;font-size:9.7px;color:#222;font-weight:normal;">JUN</div>
<div class="t" style="left:274.25px;width:200px;text-align:center;top:506.89px;font-size:9.7px;color:#222;font-weight:normal;">JUL</div>
<div class="t" style="left:326.95px;width:200px;text-align:center;top:506.89px;font-size:9.7px;color:#222;font-weight:normal;">AUG</div>
<div class="t" style="left:378.80px;width:200px;text-align:center;top:506.89px;font-size:9.7px;color:#222;font-weight:normal;">SEP</div>
<div class="t" style="left:430.65px;width:200px;text-align:center;top:506.89px;font-size:9.7px;color:#222;font-weight:normal;">OCT</div>
<div class="t" style="left:482.50px;width:200px;text-align:center;top:506.89px;font-size:9.7px;color:#222;font-weight:normal;">NOV</div>
<div class="t" style="left:534.35px;width:200px;text-align:center;top:506.89px;font-size:9.7px;color:#222;font-weight:normal;">DEC</div>
<div class="t" style="left:587.05px;width:200px;text-align:center;top:506.89px;font-size:9.7px;color:#222;font-weight:normal;">JAN</div>
<div class="t" style="left:637.20px;width:200px;text-align:center;top:506.89px;font-size:9.7px;color:#222;font-weight:normal;">FEB</div>
<div class="t" style="left:687.35px;width:200px;text-align:center;top:506.89px;font-size:9.7px;color:#222;font-weight:normal;">MAR</div>
<div class="t" style="left:739.20px;width:200px;text-align:center;top:506.89px;font-size:9.7px;color:#222;font-weight:normal;">APR</div>
<div style="position:absolute;left:40.00px;top:534.63px;width:833.00px;height:14.43px;background:#f2f2f2"></div>
<div style="position:absolute;left:40.00px;top:563.49px;width:833.00px;height:14.43px;background:#f2f2f2"></div>
<div style="position:absolute;left:40.00px;top:592.35px;width:833.00px;height:14.43px;background:#f2f2f2"></div>
<div style="position:absolute;left:40.00px;top:621.21px;width:833.00px;height:14.43px;background:#f2f2f2"></div>
<div style="position:absolute;left:40.00px;top:650.07px;width:833.00px;height:14.43px;background:#f2f2f2"></div>
<div style="position:absolute;left:40.00px;top:678.93px;width:833.00px;height:14.43px;background:#f2f2f2"></div>
<div style="position:absolute;left:40.00px;top:707.79px;width:833.00px;height:14.43px;background:#f2f2f2"></div>
<svg style="position:absolute;left:0;top:0" width="875" height="743" viewBox="0 0 875 743"><defs><pattern id="dia" x="0.9" y="0" width="5.44" height="20" patternUnits="userSpaceOnUse"><path d="M2.72 0.3 L4.65 2.3 L2.72 4.3 L0.79 2.3 Z" fill="#66b0ee" stroke="#7f8fa0" stroke-width="0.3"/><rect x="2.3" y="6.3" width="0.9" height="0.7" fill="#8aa0b8" opacity="0.45"/></pattern><pattern id="dial" x="0.9" y="0" width="5.44" height="20" patternUnits="userSpaceOnUse"><path d="M2.72 0.6 L4.4 2.3 L2.72 4.0 L1.04 2.3 Z" fill="#7cb0dc" stroke="#5f7a96" stroke-width="0.45"/><rect x="2.3" y="6.3" width="0.9" height="0.7" fill="#6f8fb0" opacity="0.45"/></pattern><pattern id="hatch" x="0" y="0" width="3.5" height="5" patternUnits="userSpaceOnUse" patternTransform="rotate(45)"><rect x="0" y="0" width="0.9" height="5" fill="#dde8f2"/></pattern></defs><rect x="39.0" y="523.30" width="485.20" height="11.4" fill="#074a78"/><g transform="translate(0,523.30)"><rect x="40.00" y="0" width="483.20" height="8" fill="url(#dia)"/></g><path d="M51.2 526.40 L47.8 529.30 L51.2 532.20 M55.9 526.40 L52.5 529.30 L55.9 532.20" fill="none" stroke="#08203a" stroke-width="1.9"/><rect x="131.3" y="537.73" width="68.40" height="11.4" fill="#0a77a9"/><g transform="translate(0,537.73)"><rect x="132.30" y="0" width="66.40" height="8" fill="url(#dia)"/></g><rect x="162.0" y="552.16" width="217.00" height="11.4" fill="#0a77a9"/><g transform="translate(0,552.16)"><rect x="163.00" y="0" width="215.00" height="8" fill="url(#dia)"/></g><rect x="333.1" y="566.59" width="228.90" height="11.4" fill="#0a77a9"/><g transform="translate(0,566.59)"><rect x="334.10" y="0" width="226.90" height="8" fill="url(#dia)"/></g><rect x="39.0" y="581.02" width="361.30" height="11.4" fill="#074a78"/><g transform="translate(0,581.02)"><rect x="40.00" y="0" width="359.30" height="8" fill="url(#dia)"/></g><rect x="39.0" y="581.02" width="63.60" height="11.4" fill="url(#hatch)"/><path d="M51.2 584.12 L47.8 587.02 L51.2 589.92 M55.9 584.12 L52.5 587.02 L55.9 589.92" fill="none" stroke="#08203a" stroke-width="1.9"/><rect x="245.1" y="595.45" width="355.90" height="11.4" fill="#11a08e"/><g transform="translate(0,595.45)"><rect x="246.10" y="0" width="353.90" height="8" fill="url(#dia)"/></g><rect x="39.0" y="609.88" width="59.00" height="11.4" fill="#11a08e"/><g transform="translate(0,609.88)"><rect x="40.00" y="0" width="57.00" height="8" fill="url(#dia)"/></g><path d="M51.2 612.98 L47.8 615.88 L51.2 618.78 M55.9 612.98 L52.5 615.88 L55.9 618.78" fill="none" stroke="#0b4a40" stroke-width="1.9"/><rect x="61.0" y="624.31" width="622.00" height="11.4" fill="#11a08e"/><g transform="translate(0,624.31)"><rect x="62.00" y="0" width="620.00" height="8" fill="url(#dia)"/></g><rect x="320.5" y="638.74" width="104.90" height="11.4" fill="#80d1b8"/><g transform="translate(0,638.74)"><rect x="321.50" y="0" width="102.90" height="8" fill="url(#dial)"/></g><rect x="178.0" y="653.17" width="93.50" height="11.4" fill="#80d1b8"/><g transform="translate(0,653.17)"><rect x="179.00" y="0" width="91.50" height="8" fill="url(#dial)"/></g><rect x="160.2" y="667.60" width="190.50" height="11.4" fill="#80d1b8"/><g transform="translate(0,667.60)"><rect x="161.20" y="0" width="188.50" height="8" fill="url(#dial)"/></g><rect x="345.7" y="682.03" width="127.00" height="11.4" fill="#ef9a2c"/><g transform="translate(0,682.03)"><rect x="346.70" y="0" width="125.00" height="8" fill="url(#dial)"/></g><rect x="199.2" y="696.46" width="307.70" height="11.4" fill="#80d1b8"/><rect x="203.0" y="710.89" width="53.40" height="11.4" fill="#80d1b8"/><rect x="112.5" y="725.32" width="104.10" height="11.4" fill="#80d1b8"/><path d="M519.70 523.70 L527.30 523.70 L523.50 529.90 Z" fill="#00b2f2" stroke="#3a3a3a" stroke-width="0.9" stroke-linejoin="miter"/><path d="M127.50 538.13 L135.10 538.13 L131.30 544.33 Z" fill="#00b2f2" stroke="#3a3a3a" stroke-width="0.9" stroke-linejoin="miter"/><path d="M172.10 538.13 L179.70 538.13 L175.90 544.33 Z" fill="#00b2f2" stroke="#3a3a3a" stroke-width="0.9" stroke-linejoin="miter"/><path d="M158.20 552.56 L165.80 552.56 L162.00 558.76 Z" fill="#00b2f2" stroke="#3a3a3a" stroke-width="0.9" stroke-linejoin="miter"/><path d="M382.40 552.56 L390.00 552.56 L386.20 558.76 Z" fill="#00b2f2" stroke="#3a3a3a" stroke-width="0.9" stroke-linejoin="miter"/><path d="M329.50 566.99 L337.10 566.99 L333.30 573.19 Z" fill="#00b2f2" stroke="#3a3a3a" stroke-width="0.9" stroke-linejoin="miter"/><path d="M394.60 581.42 L402.20 581.42 L398.40 587.62 Z" fill="#00b2f2" stroke="#3a3a3a" stroke-width="0.9" stroke-linejoin="miter"/><path d="M241.40 595.85 L249.00 595.85 L245.20 602.05 Z" fill="#00b2f2" stroke="#3a3a3a" stroke-width="0.9" stroke-linejoin="miter"/><path d="M597.20 595.85 L604.80 595.85 L601.00 602.05 Z" fill="#00b2f2" stroke="#3a3a3a" stroke-width="0.9" stroke-linejoin="miter"/><path d="M97.70 610.28 L105.30 610.28 L101.50 616.48 Z" fill="#00b2f2" stroke="#3a3a3a" stroke-width="0.9" stroke-linejoin="miter"/><path d="M57.50 624.71 L65.10 624.71 L61.30 630.91 Z" fill="#00b2f2" stroke="#3a3a3a" stroke-width="0.9" stroke-linejoin="miter"/><path d="M679.20 624.71 L686.80 624.71 L683.00 630.91 Z" fill="#00b2f2" stroke="#3a3a3a" stroke-width="0.9" stroke-linejoin="miter"/><path d="M317.50 639.14 L325.10 639.14 L321.30 645.34 Z" fill="#00b2f2" stroke="#3a3a3a" stroke-width="0.9" stroke-linejoin="miter"/><path d="M174.80 653.57 L182.40 653.57 L178.60 659.77 Z" fill="#00b2f2" stroke="#3a3a3a" stroke-width="0.9" stroke-linejoin="miter"/><path d="M156.60 668.00 L164.20 668.00 L160.40 674.20 Z" fill="#00b2f2" stroke="#3a3a3a" stroke-width="0.9" stroke-linejoin="miter"/><path d="M341.80 682.43 L349.40 682.43 L345.60 688.63 Z" fill="#00b2f2" stroke="#3a3a3a" stroke-width="0.9" stroke-linejoin="miter"/><path d="M195.50 696.86 L203.10 696.86 L199.30 703.06 Z" fill="#00b2f2" stroke="#3a3a3a" stroke-width="0.9" stroke-linejoin="miter"/><path d="M502.20 696.86 L509.80 696.86 L506.00 703.06 Z" fill="#00b2f2" stroke="#3a3a3a" stroke-width="0.9" stroke-linejoin="miter"/><path d="M199.20 711.29 L206.80 711.29 L203.00 717.49 Z" fill="#00b2f2" stroke="#3a3a3a" stroke-width="0.9" stroke-linejoin="miter"/><path d="M252.60 711.29 L260.20 711.29 L256.40 717.49 Z" fill="#00b2f2" stroke="#3a3a3a" stroke-width="0.9" stroke-linejoin="miter"/><path d="M108.80 725.72 L116.40 725.72 L112.60 731.92 Z" fill="#00b2f2" stroke="#3a3a3a" stroke-width="0.9" stroke-linejoin="miter"/><path d="M212.80 725.72 L220.40 725.72 L216.60 731.92 Z" fill="#00b2f2" stroke="#3a3a3a" stroke-width="0.9" stroke-linejoin="miter"/></svg>
<div class="t" style="left:526.70px;top:524.30px;font-size:10.4px;color:#222;font-weight:normal;transform:scaleX(0.8775);transform-origin:0 0;">S+W 20XX</div>
<div class="t" style="left:576.30px;top:524.30px;font-size:10.4px;color:#222;font-weight:normal;transform:scaleX(0.9659);transform-origin:0 0;">Systempflege und Wartung</div>
<div class="t" style="left:225.60px;top:538.73px;font-size:10.4px;color:#222;font-weight:normal;transform:scaleX(0.8600);transform-origin:0 0;">PMO</div>
<div class="t" style="left:250.69px;top:538.73px;font-size:10.4px;color:#222;font-weight:normal;transform:scaleX(0.9783);transform-origin:0 0;">Aufbau eines Project Office</div>
<div class="t" style="left:380.10px;top:553.16px;font-size:10.4px;color:#222;font-weight:normal;transform:scaleX(0.8600);transform-origin:0 0;">PL-PROJ...</div>
<div class="t" style="left:430.01px;top:553.16px;font-size:10.4px;color:#222;font-weight:normal;transform:scaleX(0.9564);transform-origin:0 0;">Einführung von PLANTA Project</div>
<div class="t" style="left:568.70px;top:567.59px;font-size:10.4px;color:#222;font-weight:normal;transform:scaleX(0.8600);transform-origin:0 0;">PL-POR..</div>
<div class="t" style="left:611.68px;top:567.59px;font-size:10.4px;color:#222;font-weight:normal;transform:scaleX(0.9929);transform-origin:0 0;">PLANTA Portfolio einführen</div>
<div class="t" style="left:427.90px;top:582.02px;font-size:10.4px;color:#222;font-weight:normal;transform:scaleX(0.9300);transform-origin:0 0;">7000</div>
<div class="t" style="left:454.12px;top:582.02px;font-size:10.4px;color:#222;font-weight:normal;transform:scaleX(0.9682);transform-origin:0 0;">Neues Vertriebsystem</div>
<div class="t" style="left:628.00px;top:596.45px;font-size:10.4px;color:#222;font-weight:normal;transform:scaleX(0.9300);transform-origin:0 0;">8000</div>
<div class="t" style="left:654.22px;top:596.45px;font-size:10.4px;color:#222;font-weight:normal;transform:scaleX(0.9148);transform-origin:0 0;">Neues BDE-System</div>
<div class="t" style="left:125.20px;top:610.88px;font-size:10.4px;color:#222;font-weight:normal;transform:scaleX(0.9125);transform-origin:0 0;">E001</div>
<div class="t" style="left:152.06px;top:610.88px;font-size:10.4px;color:#222;font-weight:normal;transform:scaleX(0.9203);transform-origin:0 0;">Neues CRM-System</div>
<div class="t" style="left:696.40px;top:625.31px;font-size:10.4px;color:#222;font-weight:normal;transform:scaleX(0.8700);transform-origin:0 0;">L1-JJJJ</div>
<div class="t" style="left:732.27px;top:625.31px;font-size:10.4px;color:#222;font-weight:normal;transform:scaleX(1.0362);transform-origin:0 0;">Linientätigkeiten JJJJ</div>
<div class="t" style="left:453.40px;top:639.74px;font-size:10.4px;color:#222;font-weight:normal;transform:scaleX(0.9300);transform-origin:0 0;">0018</div>
<div class="t" style="left:479.62px;top:639.74px;font-size:10.4px;color:#222;font-weight:normal;transform:scaleX(0.9598);transform-origin:0 0;">New storage area network system (SAN)</div>
<div class="t" style="left:298.40px;top:654.17px;font-size:10.4px;color:#222;font-weight:normal;transform:scaleX(0.9300);transform-origin:0 0;">0005</div>
<div class="t" style="left:324.62px;top:654.17px;font-size:10.4px;color:#222;font-weight:normal;transform:scaleX(0.9619);transform-origin:0 0;">New server farm</div>
<div class="t" style="left:378.40px;top:668.60px;font-size:10.4px;color:#222;font-weight:normal;transform:scaleX(0.9300);transform-origin:0 0;">0008</div>
<div class="t" style="left:404.62px;top:668.60px;font-size:10.4px;color:#222;font-weight:normal;transform:scaleX(0.9685);transform-origin:0 0;">Neues Zugangskontrollsystem</div>
<div class="t" style="left:489.90px;top:683.03px;font-size:10.4px;color:#222;font-weight:normal;transform:scaleX(0.9300);transform-origin:0 0;">000000</div>
<div class="t" style="left:526.86px;top:683.03px;font-size:10.4px;color:#222;font-weight:normal;transform:scaleX(0.9580);transform-origin:0 0;">IT Project</div>
<div class="t" style="left:534.50px;top:697.46px;font-size:10.4px;color:#222;font-weight:normal;transform:scaleX(0.9300);transform-origin:0 0;">0001</div>
<div class="t" style="left:560.72px;top:697.46px;font-size:10.4px;color:#222;font-weight:normal;transform:scaleX(0.9490);transform-origin:0 0;">Request-Mgt-System</div>
<div class="t" style="left:284.00px;top:711.89px;font-size:10.4px;color:#222;font-weight:normal;transform:scaleX(0.9300);transform-origin:0 0;">0002</div>
<div class="t" style="left:310.22px;top:711.89px;font-size:10.4px;color:#222;font-weight:normal;transform:scaleX(0.9893);transform-origin:0 0;">Internet-Telefonie</div>
<div class="t" style="left:243.80px;top:726.32px;font-size:10.4px;color:#222;font-weight:normal;transform:scaleX(0.9300);transform-origin:0 0;">0015</div>
<div class="t" style="left:270.02px;top:726.32px;font-size:10.4px;color:#222;font-weight:normal;transform:scaleX(0.9916);transform-origin:0 0;">Neuer Auftritt auf Messen</div>
<svg style="position:absolute;left:0;top:0" width="875" height="743" viewBox="0 0 875 743"><line x1="39.9" y1="521.7" x2="39.9" y2="736.6" stroke="#8591b0" stroke-width="1.3"/><line x1="92.20" y1="521.7" x2="92.20" y2="736.6" stroke="#5e6e96" stroke-width="0.8" stroke-dasharray="1.2 1.3"/><line x1="141.50" y1="521.7" x2="141.50" y2="736.6" stroke="#5e6e96" stroke-width="0.8" stroke-dasharray="1.2 1.3"/><line x1="194.20" y1="521.7" x2="194.20" y2="736.6" stroke="#5e6e96" stroke-width="0.8" stroke-dasharray="1.2 1.3"/><line x1="245.20" y1="521.7" x2="245.20" y2="736.6" stroke="#5e6e96" stroke-width="0.8" stroke-dasharray="1.2 1.3"/><line x1="297.90" y1="521.7" x2="297.90" y2="736.6" stroke="#5e6e96" stroke-width="0.8" stroke-dasharray="1.2 1.3"/><line x1="348.90" y1="521.7" x2="348.90" y2="736.6" stroke="#5e6e96" stroke-width="0.8" stroke-dasharray="1.2 1.3"/><line x1="401.60" y1="521.7" x2="401.60" y2="736.6" stroke="#5e6e96" stroke-width="0.8" stroke-dasharray="1.2 1.3"/><line x1="454.30" y1="521.7" x2="454.30" y2="736.6" stroke="#5e6e96" stroke-width="0.8" stroke-dasharray="1.2 1.3"/><line x1="505.30" y1="521.7" x2="505.30" y2="736.6" stroke="#5e6e96" stroke-width="0.8" stroke-dasharray="1.2 1.3"/><line x1="558.00" y1="521.7" x2="558.00" y2="736.6" stroke="#5e6e96" stroke-width="0.8" stroke-dasharray="1.2 1.3"/><line x1="609.00" y1="521.7" x2="609.00" y2="736.6" stroke="#5e6e96" stroke-width="0.8" stroke-dasharray="1.2 1.3"/><line x1="661.70" y1="521.7" x2="661.70" y2="736.6" stroke="#7a86a8" stroke-width="1.1"/><line x1="714.40" y1="521.7" x2="714.40" y2="736.6" stroke="#5e6e96" stroke-width="0.8" stroke-dasharray="1.2 1.3"/><line x1="762.00" y1="521.7" x2="762.00" y2="736.6" stroke="#5e6e96" stroke-width="0.8" stroke-dasharray="1.2 1.3"/><line x1="814.70" y1="521.7" x2="814.70" y2="736.6" stroke="#5e6e96" stroke-width="0.8" stroke-dasharray="1.2 1.3"/><line x1="866.3" y1="521.7" x2="866.3" y2="736.6" stroke="#5e6e96" stroke-width="0.8" stroke-dasharray="1.2 1.3"/><line x1="310" y1="521.7" x2="310" y2="736.6" stroke="#8a2424" stroke-width="1.3"/><rect x="338" y="679" width="242" height="16" fill="none" stroke="#f0000a" stroke-width="2"/></svg>
</body></html>
